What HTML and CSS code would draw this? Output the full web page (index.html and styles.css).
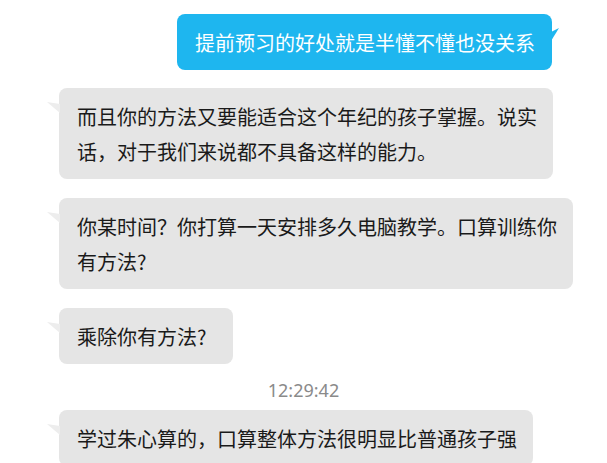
FILE: index.html
```html
<!DOCTYPE html>
<html lang="zh-CN">
<head>
<meta charset="utf-8">
<title>聊天记录</title>
<link rel="stylesheet" href="styles.css">
</head>
<body>
<div class="chat">
  <div class="msg msg-out"><div class="bubble bubble-blue">提前预习的好处就是半懂不懂也没关系</div></div>
  <div class="msg msg-in"><div class="bubble bubble-gray">而且你的方法又要能适合这个年纪的孩子掌握。说实<br>话，对于我们来说都不具备这样的能力。</div></div>
  <div class="msg msg-in"><div class="bubble bubble-gray">你某时间？你打算一天安排多久电脑教学。口算训练你<br>有方法?</div></div>
  <div class="msg msg-in"><div class="bubble bubble-gray bubble-short">乘除你有方法?</div></div>
  <div class="time">12:29:42</div>
  <div class="msg msg-in"><div class="bubble bubble-gray">学过朱心算的，口算整体方法很明显比普通孩子强</div></div>
</div>
</body>
</html>
```
FILE: styles.css
```css
html, body {
  margin: 0;
  padding: 0;
  background: #ffffff;
  height: 463px;
  overflow: hidden;
}
.chat {
  display: flex;
  flex-direction: column;
  padding: 14px 55px 0 59px;
  font-family: "Noto Sans CJK SC", "Microsoft YaHei", sans-serif;
}
.msg {
  display: flex;
}
.msg-out {
  justify-content: flex-end;
  margin-bottom: 18px;
}
.msg-in {
  justify-content: flex-start;
  margin-bottom: 19px;
}
.bubble {
  position: relative;
  font-size: 20px;
  line-height: 35px;
  padding: 11px 18px 10px 18px;
  border-radius: 8px;
  white-space: nowrap;
}
.bubble-blue {
  background: #1eb6ef;
  color: #ffffff;
  padding: 11px 17px 10px 18px;
}
.bubble-blue::after {
  content: "";
  position: absolute;
  right: -7px;
  top: 14px;
  width: 8px;
  height: 13px;
  background: #1eb6ef;
  clip-path: polygon(0 4px, 100% 0, 0 100%);
}
.bubble-gray {
  background: #e5e5e5;
  color: #1a1a1a;
  padding-right: 16px;
}
.bubble-short {
  padding-right: 27px;
}
.bubble-gray::before {
  content: "";
  position: absolute;
  left: -12px;
  top: 14px;
  width: 13px;
  height: 11px;
  background: #ededed;
  clip-path: polygon(0 0, 100% 2px, 100% 100%);
}
.time {
  text-align: center;
  font-family: "Noto Sans", "Open Sans", sans-serif;
  font-size: 18px;
  line-height: 20px;
  color: #8a8a8a;
  margin: -3px 0 10px -4px;
}
```
